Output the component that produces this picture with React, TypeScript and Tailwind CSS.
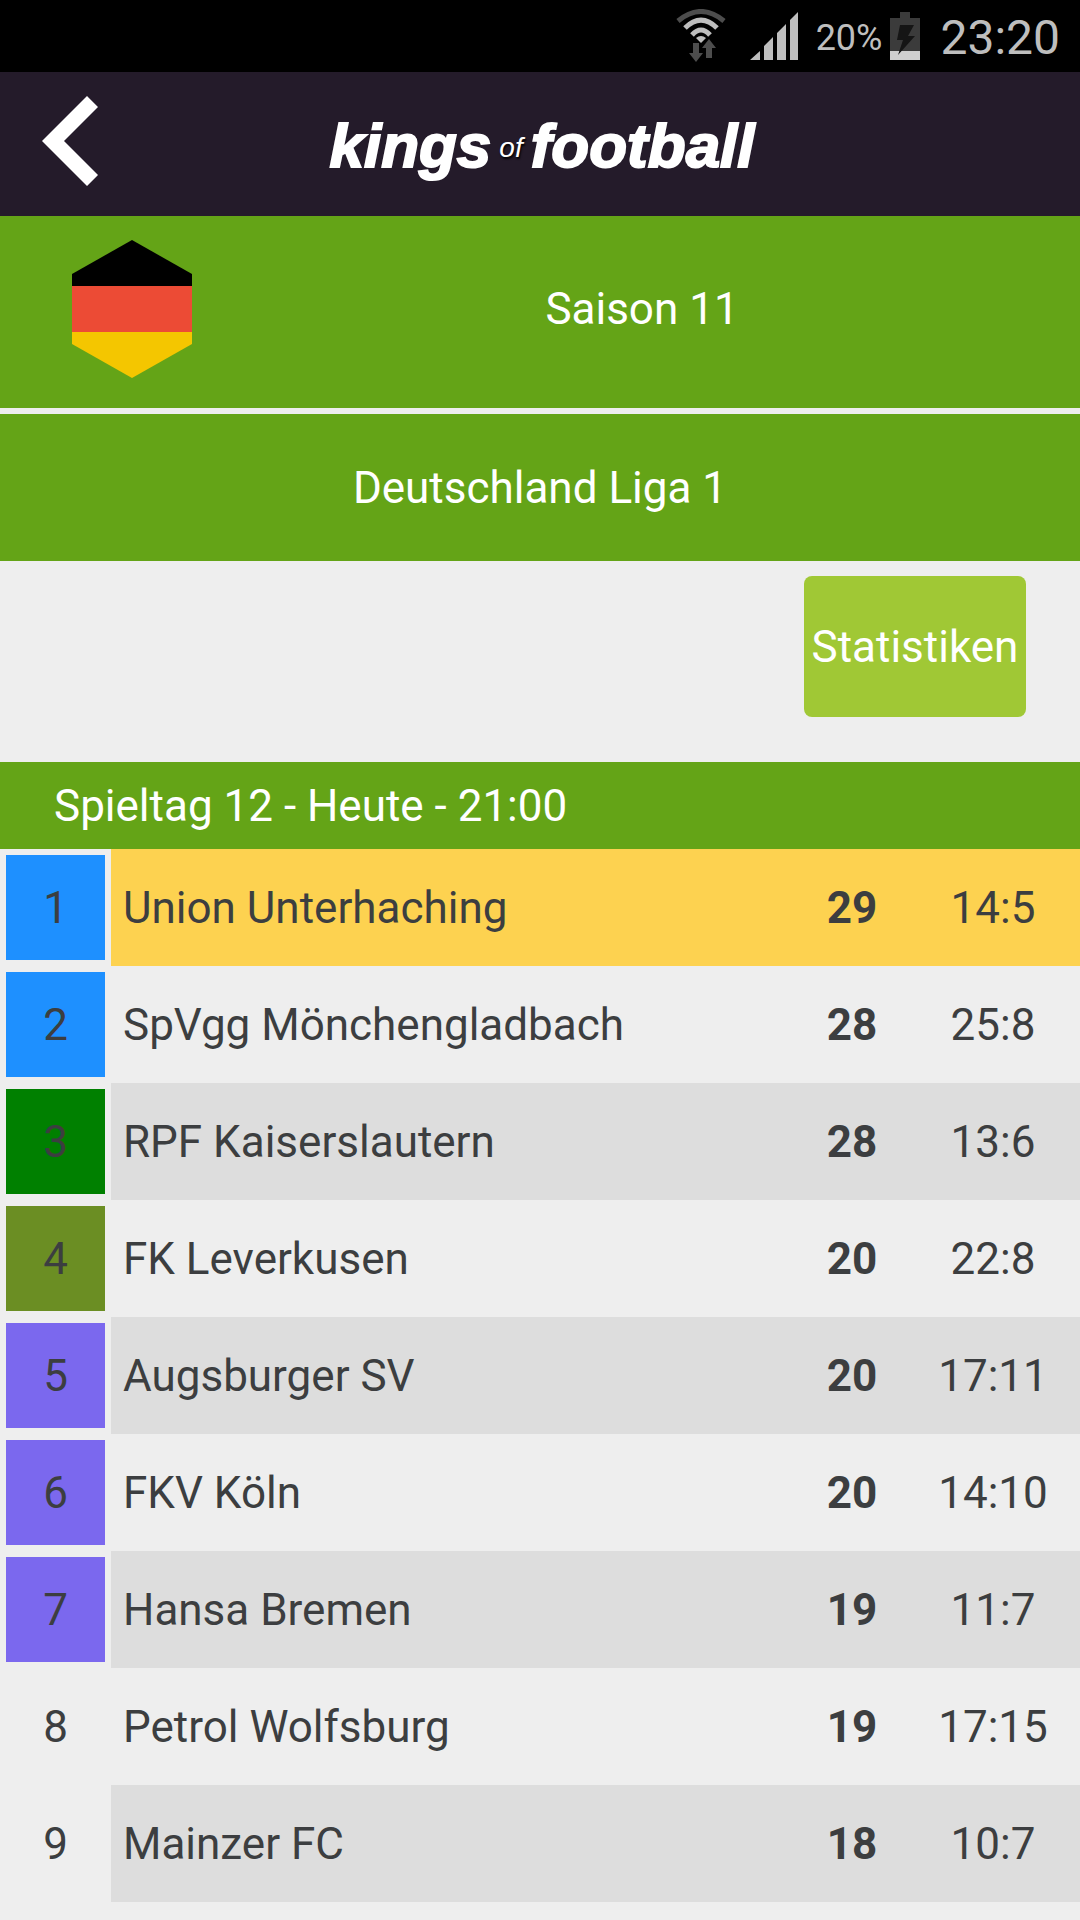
type Team = {
  rank: number;
  name: string;
  points: number;
  goals: string;
  zone?: keyof typeof ZONES;
};

const ZONES = {
  champions: "bg-[#1e90ff]",
  qualifier: "bg-[#008000]",
  cup: "bg-[#6b8e23]",
  playoff: "bg-[#7b68ee]",
};

const OWN_TEAM = "Union Unterhaching";

const TEAMS: Team[] = [
  { rank: 1, name: "Union Unterhaching", points: 29, goals: "14:5", zone: "champions" },
  { rank: 2, name: "SpVgg Mönchengladbach", points: 28, goals: "25:8", zone: "champions" },
  { rank: 3, name: "RPF Kaiserslautern", points: 28, goals: "13:6", zone: "qualifier" },
  { rank: 4, name: "FK Leverkusen", points: 20, goals: "22:8", zone: "cup" },
  { rank: 5, name: "Augsburger SV", points: 20, goals: "17:11", zone: "playoff" },
  { rank: 6, name: "FKV Köln", points: 20, goals: "14:10", zone: "playoff" },
  { rank: 7, name: "Hansa Bremen", points: 19, goals: "11:7", zone: "playoff" },
  { rank: 8, name: "Petrol Wolfsburg", points: 19, goals: "17:15" },
  { rank: 9, name: "Mainzer FC", points: 18, goals: "10:7" },
];

function WifiIcon() {
  return (
    <svg width="50" height="54" viewBox="0 0 50 54" fill="none" aria-hidden="true">
      <path d="M2 12 Q25 -7 48 12" stroke="#4d4d4d" strokeWidth="5" />
      <path d="M9 19 Q25 3 41 19" stroke="#bebebe" strokeWidth="5" />
      <path d="M16 26 Q25 16 34 26" stroke="#bebebe" strokeWidth="5" />
      <path d="M20 29 Q25 25 30 29 L25 34Z" fill="#bebebe" />
      <path d="M17 34h6v10h4l-7 9l-7-9h4z" fill="#4d4d4d" />
      <path d="M33 30l7 9h-4v10h-6v-10h-4z" fill="#4d4d4d" />
    </svg>
  );
}

function SignalIcon() {
  return (
    <svg width="48" height="48" viewBox="0 0 48 48" fill="#bebebe" aria-hidden="true">
      <path d="M0 48L10 39V48zM14 48V34L23 25V48zM27 48V21L36 12V48zM40 48V8L48 0V48z" />
    </svg>
  );
}

function BatteryIcon() {
  return (
    <svg width="30" height="48" viewBox="0 0 30 48" aria-hidden="true">
      <path d="M10 0h10v6h10v33H0V6h10z" fill="#3b3b3b" />
      <rect y="39" width="30" height="9" fill="#cfcfcf" />
      <path d="M10 13h14l-6 11h7L8 43l5-15H7z" fill="#151515" />
    </svg>
  );
}

function GermanyFlag() {
  return (
    <svg width="120" height="138" viewBox="0 0 120 138" role="img" aria-label="Deutschland">
      <path d="M60 0L120 34V46H0V34z" fill="#000" />
      <rect y="46" width="120" height="46" fill="#ec4b35" />
      <path d="M0 92H120V104L60 138L0 104z" fill="#f4c600" />
    </svg>
  );
}

function Logo() {
  return (
    <h1 className="flex items-center pt-1 pl-1 text-[62px] leading-[72px] font-bold italic text-white [font-family:'Liberation_Sans',Arial,sans-serif] [-webkit-text-stroke:2px_white]">
      <span>kings</span>
      <span className="mx-2 pt-1 text-[28px] leading-8 font-normal [-webkit-text-stroke:0] [text-shadow:1px_2px_2px_black]">
        of
      </span>
      <span>football</span>
    </h1>
  );
}

function StandingsRow({ team }: { team: Team }) {
  const own = team.name === OWN_TEAM;
  const shade = own ? "bg-[#fdd250]" : team.rank % 2 ? "bg-[#dddddd]" : "bg-[#eeeeee]";

  return (
    <tr className="h-[117px]">
      <td className="h-[117px] p-1.5 text-center">
        <div className={`flex h-[105px] items-center justify-center ${team.zone ? ZONES[team.zone] : ""}`}>
          {team.rank}
        </div>
      </td>
      <td className={`pl-3 whitespace-nowrap ${shade}`}>{team.name}</td>
      <td className={`text-center font-bold ${shade}`}>{team.points}</td>
      <td className={`text-center ${shade}`}>{team.goals}</td>
    </tr>
  );
}

export default function App() {
  return (
    <div className="min-h-screen bg-[#eeeeee] text-[44px] leading-[52px] text-[#3c3e40] [font-family:Roboto,sans-serif]">
      {/* Status bar */}
      <div className="flex h-[72px] items-center justify-end bg-black pr-5 text-[#bebebe]">
        <WifiIcon />
        <span className="ml-6">
          <SignalIcon />
        </span>
        <span className="ml-[18px] pt-1 text-[36px] leading-[48px]">20%</span>
        <span className="ml-2">
          <BatteryIcon />
        </span>
        <span className="ml-5 pt-1 text-[48px] leading-[56px]">23:20</span>
      </div>

      {/* App header */}
      <header className="grid h-36 grid-cols-[1fr_auto_1fr] items-center bg-[#241b2a]">
        <button type="button" aria-label="Zurück" className="mb-1.5 ml-[42px] justify-self-start">
          <svg width="56" height="90" viewBox="0 0 56 90" fill="#fff" aria-hidden="true">
            <path d="M45 0L56 11L22 45L56 79L45 90L0 45z" />
          </svg>
        </button>
        <Logo />
      </header>

      <section className="flex items-center bg-[#64a417] pt-6 pb-[30px] pl-[72px] text-white">
        <GermanyFlag />
        <p className="ml-3 flex-1 text-center">Saison 11</p>
      </section>
      <h2 className="mt-1.5 flex h-[147px] items-center justify-center bg-[#64a417] text-white">
        Deutschland Liga 1
      </h2>

      <div className="flex justify-end pt-[15px] pr-[54px] pb-[45px]">
        <button
          type="button"
          className="flex h-[141px] w-[222px] items-center justify-center rounded-lg bg-[#a0c835] text-white"
        >
          Statistiken
        </button>
      </div>

      {/* Standings */}
      <table className="w-full table-fixed border-collapse">
        <colgroup>
          <col className="w-[111px]" />
          <col />
          <col className="w-[108px]" />
          <col className="w-[174px]" />
        </colgroup>
        <thead>
          <tr className="h-[87px] bg-[#64a417] text-left text-white">
            <th colSpan={4} scope="colgroup" className="pl-[54px] font-normal">
              Spieltag 12 - Heute - 21:00
            </th>
          </tr>
        </thead>
        <tbody>
          {TEAMS.map((team) => (
            <StandingsRow key={team.rank} team={team} />
          ))}
        </tbody>
      </table>
    </div>
  );
}
